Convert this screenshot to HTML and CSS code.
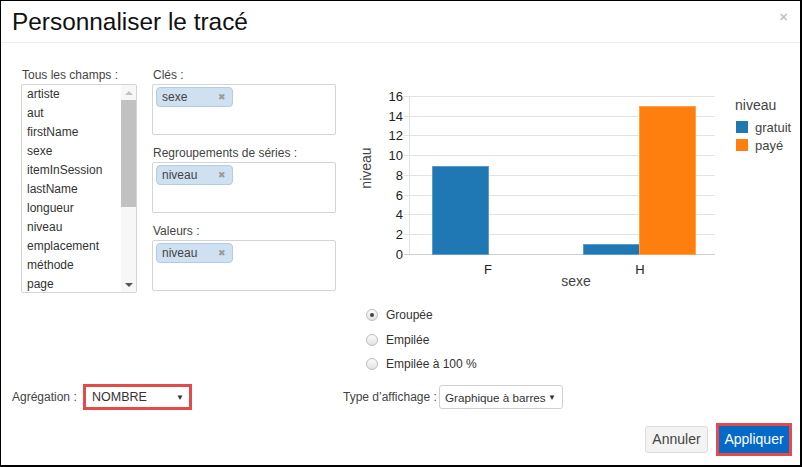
FILE: index.html
```html
<!DOCTYPE html>
<html lang="fr">
<head>
<meta charset="utf-8">
<title>Personnaliser le tracé</title>
<link rel="stylesheet" href="styles.css">
</head>
<body>
<div class="frame">
  <div class="header">
    <h1 class="title">Personnaliser le tracé</h1>
    <span class="close">&#x2715;</span>
  </div>
  <div class="body">
    <div class="top-row">
      <div class="col-fields">
        <div class="label">Tous les champs :</div>
        <div class="listbox">
          <ul class="items">
            <li>artiste</li>
            <li>aut</li>
            <li>firstName</li>
            <li>sexe</li>
            <li>itemInSession</li>
            <li>lastName</li>
            <li>longueur</li>
            <li>niveau</li>
            <li>emplacement</li>
            <li>méthode</li>
            <li>page</li>
          </ul>
          <div class="scrollbar">
            <span class="arrow up"></span>
            <span class="thumb"></span>
            <span class="track-fill"></span>
            <span class="arrow down"></span>
          </div>
        </div>
      </div>
      <div class="col-drops">
        <div class="label">Clés :</div>
        <div class="dropbox"><span class="chip"><span class="chip-text">sexe</span><span class="chip-x">&#x2716;</span></span></div>
        <div class="label">Regroupements de séries :</div>
        <div class="dropbox"><span class="chip"><span class="chip-text">niveau</span><span class="chip-x">&#x2716;</span></span></div>
        <div class="label">Valeurs :</div>
        <div class="dropbox"><span class="chip"><span class="chip-text">niveau</span><span class="chip-x">&#x2716;</span></span></div>
      </div>
      <div class="col-chart">
        <svg class="chart" width="448" height="226" viewBox="0 0 448 226">
          <g class="grid" stroke="#e3e3e3" stroke-width="1">
            <line x1="54" x2="365" y1="29.5" y2="29.5"/>
            <line x1="54" x2="365" y1="49.5" y2="49.5"/>
            <line x1="54" x2="365" y1="68.5" y2="68.5"/>
            <line x1="54" x2="365" y1="88.5" y2="88.5"/>
            <line x1="54" x2="365" y1="108.5" y2="108.5"/>
            <line x1="54" x2="365" y1="128.5" y2="128.5"/>
            <line x1="54" x2="365" y1="147.5" y2="147.5"/>
            <line x1="54" x2="365" y1="167.5" y2="167.5"/>
            <line x1="59.5" x2="59.5" y1="29" y2="187"/>
          </g>
          <line x1="54" x2="365" y1="187.5" y2="187.5" stroke="#cfcfcf"/>
          <g class="ticks" font-family="Liberation Sans, Arial, sans-serif" font-size="13" fill="#222" text-anchor="end">
            <text x="53" y="34">16</text>
            <text x="53" y="54">14</text>
            <text x="53" y="73">12</text>
            <text x="53" y="93">10</text>
            <text x="53" y="113">8</text>
            <text x="53" y="133">6</text>
            <text x="53" y="152">4</text>
            <text x="53" y="172">2</text>
            <text x="53" y="192">0</text>
          </g>
          <rect x="82.5" y="99.5" width="56" height="88" fill="#1f77b4" stroke="#5b9bd0"/>
          <rect x="233.5" y="177.5" width="56" height="10" fill="#1f77b4" stroke="#5b9bd0"/>
          <rect x="289.5" y="39.5" width="56" height="148" fill="#ff7f0e" stroke="#ffa04a"/>
          <g font-family="Liberation Sans, Arial, sans-serif" font-size="13" fill="#222" text-anchor="middle">
            <text x="138" y="207">F</text>
            <text x="290" y="207">H</text>
          </g>
          <text x="226" y="219" font-family="Liberation Sans, Arial, sans-serif" font-size="14" fill="#444" text-anchor="middle">sexe</text>
          <text transform="translate(21 101) rotate(-90)" font-family="Liberation Sans, Arial, sans-serif" font-size="14" fill="#444" text-anchor="middle">niveau</text>
          <text x="385" y="43" font-family="Liberation Sans, Arial, sans-serif" font-size="14" fill="#444">niveau</text>
          <rect x="386" y="54" width="12" height="12" fill="#1f77b4"/>
          <rect x="386" y="72" width="12" height="12" fill="#ff7f0e"/>
          <text x="405" y="65" font-family="Liberation Sans, Arial, sans-serif" font-size="13" fill="#444">gratuit</text>
          <text x="405" y="83" font-family="Liberation Sans, Arial, sans-serif" font-size="13" fill="#444">payé</text>
        </svg>
      </div>
    </div>
    <div class="radios">
      <label class="radio"><span class="dot checked"></span>Groupée</label>
      <label class="radio"><span class="dot"></span>Empilée</label>
      <label class="radio"><span class="dot"></span>Empilée à 100 %</label>
    </div>
    <div class="controls">
      <div class="control agg">
        <span class="ctl-label">Agrégation :</span>
        <span class="select highlight"><span class="select-text">NOMBRE</span><span class="caret">&#x25BC;</span></span>
      </div>
      <div class="control type">
        <span class="ctl-label">Type d’affichage :</span>
        <span class="select plain"><span class="select-text">Graphique à barres</span><span class="caret">&#x25BC;</span></span>
      </div>
    </div>
    <div class="footer">
      <button class="btn cancel">Annuler</button>
      <span class="apply-wrap"><button class="btn apply">Appliquer</button></span>
    </div>
  </div>
</div>
</body>
</html>
```

FILE: styles.css
```css
* { box-sizing: border-box; }
html, body { margin: 0; padding: 0; background: #fff; }
body {
  font-family: "Liberation Sans", Arial, sans-serif;
  color: #333;
  font-size: 12px;
}
.frame {
  width: 802px;
  height: 467px;
  border-style: solid;
  border-color: #000;
  border-width: 1px 2px 2px 1px;
  overflow: hidden;
}
.header {
  height: 42px;
  border-bottom: 1px solid #ececec;
  display: flex;
  align-items: center;
  justify-content: space-between;
  padding: 0 12px 0 11px;
}
.title {
  margin: 0;
  font-weight: normal;
  font-size: 24.4px;
  color: #111;
  line-height: 40px;
}
.close {
  color: #c4c4c4;
  font-size: 11px;
  font-weight: bold;
  margin-top: -8px;
}
.body {
  padding: 24px 0 0 0;
}
.top-row {
  display: flex;
  height: 226px;
}
.label {
  height: 17px;
  line-height: 16px;
  color: #444;
  font-size: 12px;
}
.col-fields {
  margin-left: 20px;
  width: 116px;
}
.col-fields .label { padding-left: 1px; }
.listbox {
  width: 116px;
  height: 209px;
  border: 1px solid #d4d4d4;
  border-radius: 2px;
  display: flex;
  overflow: hidden;
}
.items {
  list-style: none;
  margin: 0;
  padding: 0 0 0 5px;
  flex: 1;
  color: #333;
}
.items li {
  height: 19px;
  line-height: 19px;
  white-space: nowrap;
}
.scrollbar {
  width: 15px;
  display: flex;
  flex-direction: column;
  align-items: center;
  background: #f7f7f7;
}
.arrow {
  width: 0;
  height: 0;
  border-left: 4px solid transparent;
  border-right: 4px solid transparent;
}
.arrow.up {
  border-bottom: 4px solid #c3c3c3;
  margin: 6px 0 5px;
}
.thumb {
  width: 100%;
  height: 107px;
  background: #c1c1c1;
}
.track-fill { flex: 1; }
.arrow.down {
  border-top: 4px solid #555;
  margin: 0 0 5px;
}
.col-drops {
  margin-left: 15px;
  width: 184px;
}
.col-drops .label { padding-left: 1px; }
.dropbox {
  height: 51px;
  border: 1px solid #d4d4d4;
  border-radius: 2px;
  padding: 2px 3px;
  margin-bottom: 10px;
}
.chip {
  display: inline-flex;
  align-items: center;
  justify-content: space-between;
  width: 77px;
  height: 20px;
  background: #cfe0f1;
  border: 1px solid #b3cce5;
  border-radius: 4px;
  padding: 0 6px 0 5px;
  color: #444;
  font-size: 12px;
}
.chip-x {
  color: #9a9a9a;
  font-size: 9px;
}
.col-chart {
  margin-left: 14px;
  width: 448px;
}
.chart { display: block; overflow: visible; }
.radios {
  margin: 10px 0 0 365px;
  display: flex;
  flex-direction: column;
}
.radio {
  height: 24.5px;
  display: flex;
  align-items: center;
  color: #333;
  font-size: 12px;
}
.dot {
  width: 12px;
  height: 12px;
  border-radius: 50%;
  border: 1px solid #bdbdbd;
  background: linear-gradient(#fbfbfb, #e3e3e3);
  margin-right: 8px;
  display: inline-flex;
  align-items: center;
  justify-content: center;
}
.dot.checked::after {
  content: "";
  width: 4px;
  height: 4px;
  border-radius: 50%;
  background: #444;
}
.controls {
  display: flex;
  align-items: center;
  margin-top: 7px;
  height: 27px;
}
.control {
  display: flex;
  align-items: center;
}
.agg { margin-left: 11px; width: 331px; }
.ctl-label {
  color: #444;
  font-size: 12px;
}
.agg .ctl-label { width: 71px; }
.type .ctl-label { width: 96px; }
.select {
  display: inline-flex;
  align-items: center;
  justify-content: space-between;
  color: #333;
  font-size: 12px;
}
.select.highlight {
  width: 109px;
  height: 26px;
  border: 3px solid #e34a4a;
  padding: 0 5px 0 6px;
  font-size: 12.5px;
}
.select.plain {
  width: 124px;
  height: 24px;
  border: 1px solid #cfcfcf;
  border-radius: 3px;
  padding: 0 6px 0 5px;
  font-size: 11.7px;
}
.caret {
  font-size: 8px;
  color: #333;
}
.footer {
  display: flex;
  justify-content: flex-end;
  align-items: center;
  margin-top: 12px;
  padding-right: 8px;
  height: 33px;
}
.btn {
  font-family: "Liberation Sans", Arial, sans-serif;
  font-size: 14px;
  height: 27px;
  border-radius: 3px;
  cursor: pointer;
}
.cancel {
  width: 63px;
  background: #f3f3f3;
  border: 1px solid #dcdcdc;
  color: #444;
  margin-right: 8px;
}
.apply-wrap {
  display: inline-flex;
  border: 3px solid #e34a4a;
}
.apply {
  width: 70px;
  border: none;
  border-radius: 0;
  background: #0569c8;
  color: #fff;
  padding: 0;
}
```
